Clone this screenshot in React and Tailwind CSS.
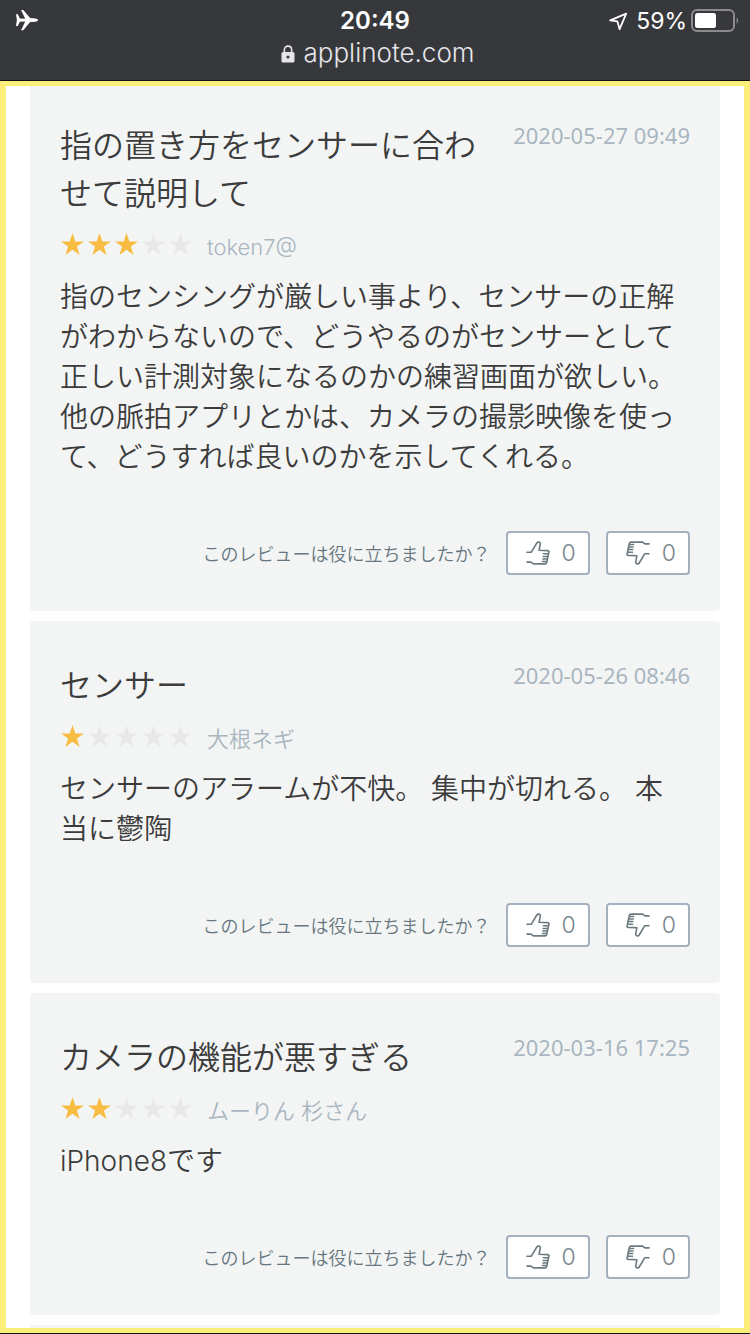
const reviews = [
  {
    title: "指の置き方をセンサーに合わせて説明して",
    date: "2020-05-27 09:49",
    stars: 3,
    user: "token7@",
    body: "指のセンシングが厳しい事より、センサーの正解がわからないので、どうやるのがセンサーとして正しい計測対象になるのかの練習画面が欲しい。他の脈拍アプリとかは、カメラの撮影映像を使って、どうすれば良いのかを示してくれる。",
  },
  {
    title: "センサー",
    date: "2020-05-26 08:46",
    stars: 1,
    user: "大根ネギ",
    body: "センサーのアラームが不快。 集中が切れる。 本当に鬱陶",
  },
  {
    title: "カメラの機能が悪すぎる",
    date: "2020-03-16 17:25",
    stars: 2,
    user: "ムーりん 杉さん",
    body: "iPhone8です",
  },
];

function Thumb({ down }) {
  return (
    <svg
      viewBox="0 0 24 24"
      className={down ? "size-6 rotate-180" : "size-6"}
      fill="none"
      stroke="currentColor"
      strokeWidth="1.6"
      strokeLinecap="round"
      strokeLinejoin="round"
      aria-hidden="true"
    >
      <path d="M1 11.3H5.2L10.8 2C11.6 .6 14.6 .9 14.3 2.8L13.1 9.3L21.6 9.6C23 9.8 23.3 10.8 22.7 12L20.6 21.8C20.4 22.6 19.8 22.9 19 22.9H7.4L5 21.1H1" />
      <path d="M17.4 12.7H22.2M17.2 15.4H21.6M16.8 18H21M16.4 20.5H20.4" strokeWidth="1.5" />
    </svg>
  );
}

function VoteButton({ down }) {
  return (
    <button
      type="button"
      aria-label={down ? "役に立たなかった 0" : "役に立った 0"}
      className="flex h-11 items-center gap-3 rounded-sm border-2 border-[#a3b1bf] bg-white pr-3 pl-[18px] text-[#6c7a80]"
    >
      <Thumb down={down} />
      <span className="font-['Inter',sans-serif] text-[23px] leading-none font-light text-[#78868c]">0</span>
    </button>
  );
}

function Stars({ count }) {
  return (
    <div role="img" aria-label={`${count} / 5`} className="flex gap-1 pb-1 pl-px">
      {[1, 2, 3, 4, 5].map((n) => (
        <svg
          key={n}
          viewBox="0 0 24 24"
          className={n <= count ? "size-[23px] text-[#f7bc41]" : "size-[23px] text-[#e8e8e8]"}
          fill="currentColor"
          aria-hidden="true"
        >
          <path d="M12 0L14.9 8.8H24L16.6 14.2L19.4 23L12 17.6L4.6 23L7.4 14.2L0 8.8H9.1Z" />
        </svg>
      ))}
    </div>
  );
}

function Review({ review, first }) {
  return (
    <article
      className={
        first
          ? "rounded-b-sm bg-[#f3f5f5] px-[30px] pt-[33px] pb-9"
          : "rounded-sm bg-[#f3f5f5] px-[30px] pt-[38px] pb-9"
      }
    >
      <div className="flex items-start justify-between gap-6">
        <h2 className="text-[32px] leading-[48px] font-[350] text-[#3c3c3c]">{review.title}</h2>
        <time className="shrink-0 font-['Noto_Sans',sans-serif] text-[22px] leading-8 text-[#a9b6c0]">{review.date}</time>
      </div>
      <div className="flex h-[62px] items-center gap-[15px]">
        <Stars count={review.stars} />
        <span className="pt-0.5 font-['Inter','Noto_Sans_CJK_JP',sans-serif] text-[22px] leading-8 font-[350] text-[#a9b6c0]">
          {review.user}
        </span>
      </div>
      <p className="font-['Inter','Noto_Sans_CJK_JP',sans-serif] text-[28px] leading-10 font-[350] text-[#3c3c3c]">
        {review.body}
      </p>
      <div className="mt-[54px] flex items-center justify-end gap-[15px]">
        <span className="text-[18px] leading-6 font-[350] text-[#66757e]">このレビューは役に立ちましたか？</span>
        <div className="flex gap-4">
          <VoteButton />
          <VoteButton down />
        </div>
      </div>
    </article>
  );
}

function StatusBar() {
  return (
    <header className="border-b border-[#111] bg-[#37383c] font-['Inter',sans-serif] text-white">
      <div className="grid h-[42px] grid-cols-3 items-center px-[11px]">
        <svg viewBox="0 0 24 24" className="ml-1 size-6" fill="currentColor" aria-label="機内モード">
          <path d="M0 5H1.8L4 10.1L9.4 10.4L5.2 0H7.4L14.4 9.6L19.6 10C21.4 10.2 22.6 11 22.6 12C22.6 13 21.4 13.8 19.6 14L14.4 14.4L7.4 24H5.2L9.4 13.6L4 13.9L1.8 19H0L.9 12Z" transform="translate(1 1) scale(.98 .84)" />
        </svg>
        <span className="text-center text-[24px] leading-none font-semibold">20:49</span>
        <div className="flex items-center justify-end gap-1">
          <svg viewBox="0 0 20 20" className="mr-1 size-5" fill="none" stroke="currentColor" strokeWidth="1.8" strokeLinejoin="round" aria-hidden="true">
            <path d="M2.2 9.3L18.2 2.6L11.6 18.2L9.4 10.4Z" />
          </svg>
          <span className="text-[23px] leading-none">59%</span>
          <svg viewBox="0 0 48 24" className="h-6 w-12" aria-hidden="true">
            <rect x="1" y="1" width="42" height="21" rx="5" fill="none" stroke="#8b8b8e" strokeWidth="2" />
            <rect x="4" y="4" width="21" height="15" rx="2.5" fill="#fff" />
            <path d="M45.6 8.4C47.6 9.4 47.6 13.6 45.6 14.6Z" fill="#8b8b8e" />
          </svg>
        </div>
      </div>
      <div className="flex h-[38px] items-start justify-center gap-2 pl-1.5 text-[#e6e6ea]">
        <svg viewBox="0 0 14 18" className="mt-[3px] h-[18px] w-3.5" aria-hidden="true">
          <path d="M3.4 8V4.6C3.4 0 10.6 0 10.6 4.6V8" fill="none" stroke="currentColor" strokeWidth="1.6" />
          <rect x=".5" y="7" width="13" height="10.6" rx="1.6" fill="currentColor" />
          <circle cx="7" cy="12" r="1.6" fill="#37383c" />
        </svg>
        <span className="text-[26px] leading-[22px] font-light">applinote.com</span>
      </div>
    </header>
  );
}

export default function App() {
  return (
    <div className="border-b border-[#111] font-['Noto_Sans_CJK_JP',sans-serif]">
      <StatusBar />
      <main className="flex flex-col gap-2.5 border-x-6 border-y-5 border-[#fcee7b] bg-white px-6">
        {reviews.map((review, i) => (
          <Review key={review.date} review={review} first={i === 0} />
        ))}
        <div className="h-[3px] rounded-t-sm bg-[#f3f5f5]" />
      </main>
    </div>
  );
}
